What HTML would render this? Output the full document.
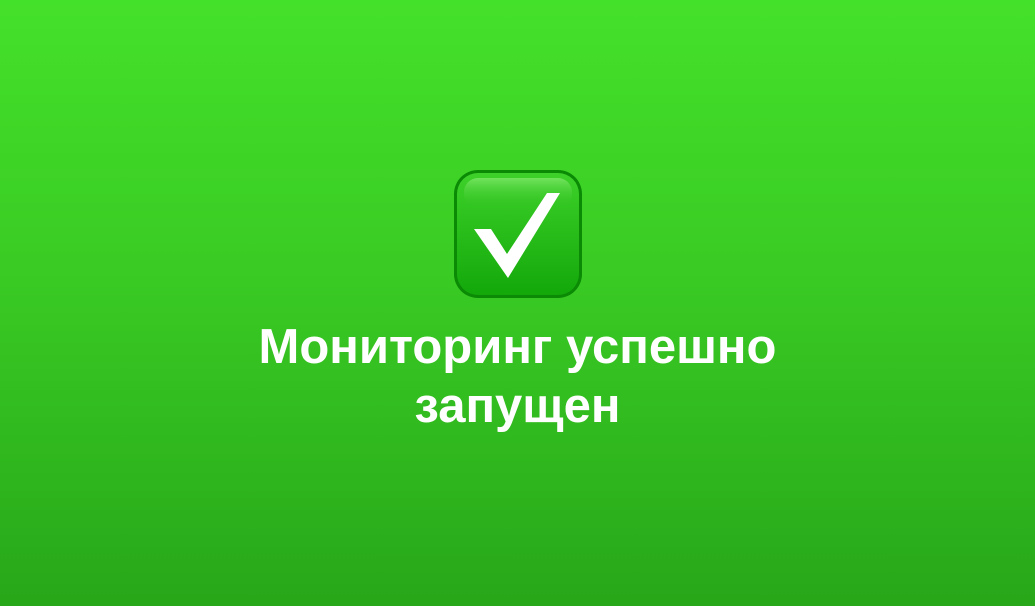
<!DOCTYPE html>
<html><head><meta charset="utf-8"><style>
html,body{margin:0;width:1035px;height:606px;overflow:hidden}
body{background:linear-gradient(180deg,#44e12a 0%,#3acb24 45%,#27a719 100%);font-family:"Liberation Sans",sans-serif;position:relative}
.t{position:absolute;left:0;right:0;top:318px;text-align:center;color:#fff;font-weight:bold;font-size:49px;line-height:59px}
svg{position:absolute;left:454px;top:170px}
</style></head><body>
<svg width="128" height="128" viewBox="0 0 128 128">
<defs>
<linearGradient id="g" x1="0" y1="0" x2="0" y2="1"><stop offset="0" stop-color="#3ed12a"/><stop offset="1" stop-color="#13a80a"/></linearGradient>
<linearGradient id="h" x1="0" y1="0" x2="0" y2="1"><stop offset="0" stop-color="#7fe86a" stop-opacity=".8"/><stop offset="1" stop-color="#2fc01e" stop-opacity="0"/></linearGradient>
</defs>
<rect x="0" y="0" width="128" height="128" rx="24" fill="#0a8a05"/>
<rect x="3" y="3" width="122" height="122" rx="21" fill="url(#g)"/>
<rect x="10" y="8" width="108" height="30" rx="14" fill="url(#h)"/>
<path d="M20 59 L37 59 L53 84 L93 23 L106 23 L54 108 Z" fill="#fff"/>
</svg>
<div class="t">Мониторинг успешно<br>запущен</div>
</body></html>
